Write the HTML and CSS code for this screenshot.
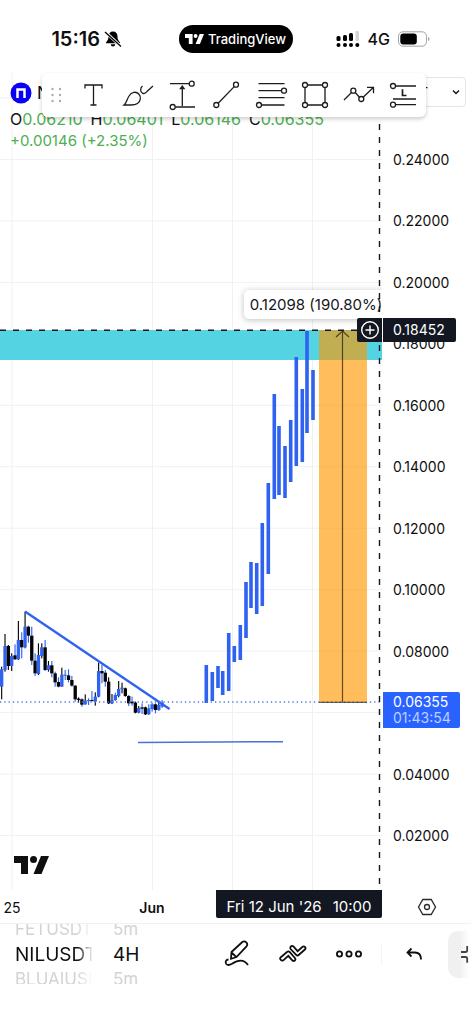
FILE: index.html
```html
<!DOCTYPE html>
<html lang="en">
<head>
  <meta charset="UTF-8">
  <meta name="viewport" content="width=device-width, initial-scale=1.0">
  <title>NILUSDT 4H</title>
  <link rel="stylesheet" href="styles.css">
</head>
<body>

<svg width="0" height="0" class="defs" aria-hidden="true">
  <symbol id="tv-logo" viewBox="0 0 35 18">
    <path d="M0 0h14v18H7V7H0z"/>
    <circle cx="19.500" cy="3.500" r="3.500"/>
    <path d="M27 0h8l-7.500 18h-8z"/>
  </symbol>
</svg>

<header class="status">
  <div class="status-side">
    <span class="clock">15:16</span>
    <svg width="18" height="18" viewBox="0 0 18 18">
      <path d="M9 1.500c-3 0-4.500 2-4.500 5C4.500 10 3 11 2 12.500v.8h14v-.8c-1-1.500-2.500-2.500-2.500-6 0-3-1.500-5-4.500-5zM6.800 14.300a2.200 2.200 0 0 0 4.400 0z"/>
      <path d="M2 2.500l15 14" stroke="#fff" stroke-width="3"/>
      <path d="M1 2l16 14.500" stroke="#000" stroke-width="1.300"/>
    </svg>
  </div>
  <div class="pill">
    <svg width="19" height="10" fill="#fff"><use href="#tv-logo"/></svg>
    <span>TradingView</span>
  </div>
  <div class="status-side signal">
    <svg width="24" height="16" viewBox="0 0 24 16">
      <rect x="0.500" y="5" width="4" height="5" rx="1.500"/>
      <rect x="7" y="4" width="4" height="6" rx="1.500"/>
      <rect x="13" y="2" width="4" height="8" rx="1.500"/>
      <rect x="19.500" y="0" width="3.500" height="10" rx="1" fill="#d5d5d7"/>
      <circle cx="2.500" cy="14" r="2"/><circle cx="9" cy="14" r="2"/>
      <circle cx="15" cy="14" r="2"/><circle cx="21.300" cy="14" r="2"/>
    </svg>
    <span class="network">4G</span>
    <svg width="32" height="16" viewBox="0 0 32 16">
      <rect x="0.500" y="0.800" width="28" height="14.400" rx="4.500" fill="#fff" stroke="#a3a3a5"/>
      <rect x="2.300" y="2.500" width="16.500" height="11" rx="3"/>
      <path d="M30 6v4q1.500-.5 1.500-2T30 6z" fill="#a3a3a5"/>
    </svg>
  </div>
</header>

<main class="chart">
  <svg class="plot" viewBox="0 73 382 817" preserveAspectRatio="xMaxYMin slice">
    <g id="grid" stroke="#f0f1f3"></g>

    <rect x="0" y="330" width="382" height="30" fill="#54d3e2"/>
    <g id="candles" transform="translate(0 590) scale(0.3333)"></g>
    <g id="bars" fill="#2f62f0"></g>

    <path d="M25 611.500L169.500 709" stroke="#2f62f0" stroke-width="2.400"/>
    <path d="M138 742.500L283 741.700" stroke="#4a72d6" stroke-width="1.500"/>
    <path d="M0 702H382" stroke="#4f78dc" stroke-width="1.300" stroke-dasharray="1.300 3"/>

    <rect x="319" y="330" width="48" height="372" fill="rgba(255, 152, 0, 0.64)"/>
    <path d="M319 702.300H367M342.500 702V331M336 337l6.500-6 6.500 6" fill="none" stroke="#000" stroke-opacity="0.6" stroke-width="1.200"/>

    <rect class="measure" x="244" y="290" width="142" height="29" rx="5"/>
    <text class="measure-text" x="316" y="310" text-anchor="middle">0.12098 (190.80%)</text>

    <g stroke="#131722" stroke-width="1.400" stroke-dasharray="6 7">
      <path d="M0 330.300H382"/>
      <path d="M379.500 72V890"/>
    </g>

    <svg x="14" y="856" width="35" height="18" fill="#0f0f0f"><use href="#tv-logo"/></svg>
  </svg>

  <ul class="scale">
    <li>0.24000</li>
    <li>0.22000</li>
    <li>0.20000</li>
    <li>0.18000</li>
    <li>0.16000</li>
    <li>0.14000</li>
    <li>0.12000</li>
    <li>0.10000</li>
    <li>0.08000</li>
    <li></li>
    <li>0.04000</li>
    <li>0.02000</li>
  </ul>

  <div class="tag tag-cursor">0.18452</div>
  <div class="tag tag-last">0.06355<span>01:43:54</span></div>
  <button class="add" aria-label="Add alert">
    <svg width="20" height="20" viewBox="0 0 20 20" fill="none" stroke="#fff" stroke-width="1.400">
      <circle cx="10" cy="10" r="8.300"/><path d="M10 5.500v9M5.500 10h9"/>
    </svg>
  </button>

  <div class="legend">
    <div class="legend-title">
      <svg width="22" height="22" viewBox="0 0 22 22">
        <circle cx="11" cy="11" r="10.500" fill="#0a00f5"/>
        <path d="M7.500 16V7.500h7V16" fill="none" stroke="#fff" stroke-width="2.500"/>
      </svg>
      <span>NIL</span>
    </div>
    <div class="ohlc">
      <span>O<b>0.06210</b></span>
      <span>H<b>0.06401</b></span>
      <span>L<b>0.06146</b></span>
      <span>C<b>0.06355</b></span>
    </div>
    <div class="change">+0.00146 (+2.35%)</div>
  </div>

  <button class="currency">
    USDT
    <svg width="10" height="8" viewBox="0 0 10 8" fill="none" stroke="#131722" stroke-width="1.500"><path d="M2 2.500l3 3 3-3"/></svg>
  </button>

  <div class="tools">
    <svg class="grip" width="29" height="32" viewBox="0 0 29 32" fill="#a9abb0">
      <circle cx="10.500" cy="10" r="1.200"/><circle cx="18" cy="10" r="1.200"/>
      <circle cx="10.500" cy="16" r="1.200"/><circle cx="18" cy="16" r="1.200"/>
      <circle cx="10.500" cy="22" r="1.200"/><circle cx="18" cy="22" r="1.200"/>
    </svg>
    <button aria-label="Text">
      <svg viewBox="0 0 32 32"><path d="M8 9.500V6h17v3.500M16.500 6v20M13.500 26h6"/></svg>
    </button>
    <button aria-label="Brush">
      <svg viewBox="0 0 32 32"><path d="M2 26c2.500-2 3-6 5-9 2.500-4 7-5 9.800-2 2.700 3 1.700 7.500-1.300 9.500-2 1.300-4 1.500-6.500 1.500zM20.500 7c-2.500 2-2.500 6 .2 7.300 2 .8 3.500-.8 4.500-2L31 7"/></svg>
    </button>
    <button aria-label="Price range">
      <svg viewBox="0 0 32 32"><path d="M4 4.700h19M9.500 28H29M16.300 27V8M14.500 9.500l1.800-2.500 1.800 2.500z"/><circle cx="25.700" cy="4.700" r="2.500"/><circle cx="6.700" cy="28" r="2.500"/></svg>
    </button>
    <button aria-label="Trend line">
      <svg viewBox="0 0 32 32"><path d="M8.200 24.200L24.200 7.600"/><circle cx="6.300" cy="26" r="2.500"/><circle cx="26" cy="5.700" r="2.500"/></svg>
    </button>
    <button aria-label="Fib retracement">
      <svg viewBox="0 0 32 32"><path d="M3.500 4.700h26M3.500 11.700h23M3.500 18.700h26M6.500 26h23"/><circle cx="29" cy="11.700" r="2.500"/><circle cx="4" cy="26" r="2.500"/></svg>
    </button>
    <button aria-label="Rectangle">
      <svg viewBox="0 0 32 32"><path d="M8.500 6h15M8.500 26h15M6 8.500v15M26 8.500v15"/><circle cx="6" cy="6" r="2.500"/><circle cx="26" cy="6" r="2.500"/><circle cx="6" cy="26" r="2.500"/><circle cx="26" cy="26" r="2.500"/></svg>
    </button>
    <button aria-label="Path">
      <svg viewBox="0 0 32 32"><path d="M1 21l7.500-7.500M12.200 13.500l4.300 4.700M20.200 18.300L30.500 8.300M24 8.300h6.500v6"/><circle cx="10.300" cy="11.700" r="2.500"/><circle cx="18.300" cy="20" r="2.500"/></svg>
    </button>
    <button aria-label="Long position">
      <svg viewBox="0 0 32 32"><path d="M7.500 7H28M5 20h23M7.500 25.700H28"/><circle cx="5" cy="7" r="2.500"/><circle cx="5" cy="25.700" r="2.500"/><path d="M14.500 10.300v6.200h4" stroke-width="1.700"/></svg>
    </button>
  </div>
</main>

<div class="timeline">
  <div class="times">
    <span>25</span>
    <strong>Jun</strong>
    <div class="tag-time"><span>Fri 12 Jun '26</span><span>10:00</span></div>
  </div>
  <button class="settings" aria-label="Chart settings">
    <svg width="20" height="20" viewBox="0 0 20 20" fill="none" stroke="#2a2a2a" stroke-width="1.300">
      <path d="M5.800 2.500h8.400l4.300 7.500-4.300 7.500H5.800L1.500 10z"/><circle cx="10" cy="10" r="2.500"/>
    </svg>
  </button>
</div>

<nav class="bottom">
  <div class="wheel wheel-symbol">
    <span>FETUSDT</span>
    <b>NILUSDT</b>
    <span>BLUAIUSDT</span>
  </div>
  <div class="wheel">
    <span>5m</span>
    <b>4H</b>
    <span>5m</span>
  </div>
  <div class="actions">
    <button aria-label="Draw">
      <svg viewBox="0 0 28 28"><path d="M8.500 12L19.300 2q2-1.500 4 .3 1.800 2 .2 4L13.500 17 8 18.800zM8.500 12.500l4.800 4.500M5.500 19.500c-2.500.3-3.300 2-2.500 4 1 2.200 3.500 1.700 6 .2 5.500-3.500 12-4.700 16 1.300"/></svg>
    </button>
    <button aria-label="Indicators">
      <svg viewBox="0 0 28 28"><path d="M1.500 17.500l6.800-5.700q1.200-.8 2.300.2l5.500 6.200q.8 1.200-.3 2.300-1.200 1-2.300 0l-4.200-4.700-5 4.500q-1.300.9-2.500-.4-1.200-1.300-.3-2.400zM11.800 6.500q1.300-1.200 2.600 0l4.200 4.700 5-4.400q1.300-.9 2.500.3 1 1.300-.2 2.400l-6.500 5.700q-1.200.8-2.200-.3L11.600 9q-.8-1.300.2-2.500z"/></svg>
    </button>
    <button aria-label="More">
      <svg viewBox="0 0 28 28"><circle cx="4.500" cy="14" r="2.600"/><circle cx="14" cy="14" r="2.600"/><circle cx="23.500" cy="14" r="2.600"/></svg>
    </button>
    <i class="divider"></i>
    <button aria-label="Undo">
      <svg viewBox="0 0 28 28"><path d="M11.500 8.500L7.500 12.500l4 4M7.500 12.500H15q6 0 6 7"/></svg>
    </button>
    <button class="expand" aria-label="Exit fullscreen">
      <svg viewBox="0 0 28 28"><path d="M1 12h4.500q1.700 0 1.700-1.700V6M1 17h4.500q1.700 0 1.700 1.700v4"/></svg>
    </button>
  </div>
</nav>

<script src="chart.js"></script>
</body>
</html>
```

FILE: styles.css
```css
* {
  box-sizing: border-box;
}

body {
  margin: 0;
  background: #fff;
  color: #0f0f0f;
  font-family: Inter, "Liberation Sans", sans-serif;
  font-size: 14px;
  overflow-x: hidden;
}

button {
  padding: 0;
  border: 0;
  background: none;
  color: inherit;
  font: inherit;
  cursor: pointer;
}

svg {
  display: block;
  flex: none;
}

.defs {
  position: absolute;
}

/* status bar */
.status {
  display: grid;
  grid-template-columns: 1fr auto 1fr;
  align-items: center;
  height: 73px;
  padding-top: 5px;
}

.status-side {
  display: flex;
  align-items: center;
  justify-content: center;
  gap: 4px;
  padding-right: 5px;
}

.signal {
  gap: 8px;
  padding: 0 0 0 2px;
}

.clock {
  font-size: 20px;
  font-weight: 600;
}

.network {
  font-size: 16px;
  font-weight: 500;
}

.pill {
  display: flex;
  align-items: center;
  justify-content: center;
  gap: 4px;
  width: 114px;
  height: 28px;
  border-radius: 14px;
  background: #000;
  color: #fff;
  font-size: 13px;
  font-weight: 500;
}

/* chart */
.chart {
  position: relative;
  display: flex;
}

.plot {
  flex: 1;
  min-width: 0;
  height: 817px;
}

.measure {
  fill: #fff;
  filter: drop-shadow(0 1px 3px rgba(0, 0, 0, 0.25));
}

.measure-text {
  font-size: 15px;
  fill: #131722;
}

.scale {
  display: flex;
  flex-direction: column;
  justify-content: space-between;
  width: 89px;
  margin: 0;
  padding: 77px 0 44px 11px;
  list-style: none;
  line-height: 20px;
}

.scale li {
  height: 20px;
}

.tag {
  position: absolute;
  right: 15px;
  width: 73px;
  padding-left: 10px;
  border-radius: 0 2px 2px 0;
  color: #fff;
}

.tag-cursor {
  top: 245px;
  background: #131722;
  line-height: 24px;
}

.tag-last {
  top: 619px;
  right: 11px;
  width: 77px;
  padding-top: 2px;
  padding-bottom: 2px;
  background: #2962ff;
  line-height: 16px;
}

.tag-last span {
  display: block;
  color: #bfd0ff;
}

.add {
  position: absolute;
  top: 245px;
  right: 89px;
  display: grid;
  place-items: center;
  width: 25px;
  height: 24px;
  border-radius: 2px 0 0 2px;
  background: #131722;
}

.legend {
  position: absolute;
  top: 9px;
  left: 10px;
  font-size: 15px;
  line-height: 22px;
}

.legend-title {
  display: flex;
  gap: 5px;
  font-size: 17px;
}

.ohlc {
  display: flex;
  gap: 8px;
  margin-top: 5px;
  font-size: 16px;
  line-height: 21px;
}

.ohlc b,
.change {
  color: #4caf50;
  font-weight: 400;
}

.currency {
  position: absolute;
  top: 4px;
  right: 5px;
  display: flex;
  align-items: center;
  justify-content: flex-end;
  gap: 23px;
  width: 78px;
  height: 30px;
  padding-right: 4px;
  border: 1px solid #e3e4e8;
  border-radius: 4px;
  background: #fff;
}

.tools {
  position: absolute;
  top: 0;
  left: 42px;
  right: 45px;
  display: flex;
  align-items: center;
  height: 44px;
  border-radius: 6px;
  background: #fff;
  box-shadow: 0 2px 4px rgba(0, 0, 0, 0.2);
}

.tools button {
  display: grid;
  flex: 1;
  place-items: center;
}

.tools button svg {
  width: 32px;
  height: 32px;
  overflow: visible;
  fill: none;
  stroke: #1c1c1c;
  stroke-width: 1.3;
}

/* time scale */
.timeline {
  display: flex;
  height: 34px;
  border-bottom: 1px solid #f0f1f3;
}

.times {
  position: relative;
  display: flex;
  flex: 1;
  gap: 98px;
  line-height: 35px;
  text-align: center;
}

.times > span {
  width: 24px;
}

.times strong {
  width: 60px;
  font-weight: 600;
}

.tag-time {
  position: absolute;
  top: 0;
  right: 0;
  display: flex;
  justify-content: center;
  gap: 11px;
  width: 166px;
  height: 28px;
  border-radius: 0 0 2px 2px;
  background: #131722;
  color: #fff;
  font-size: 15px;
  line-height: 34px;
}

.settings {
  display: grid;
  place-items: center;
  width: 89px;
}

/* bottom toolbar */
.bottom {
  display: flex;
  height: 60px;
  padding-left: 15px;
}

.wheel {
  display: flex;
  flex-direction: column;
  justify-content: center;
  overflow: hidden;
  width: 40px;
  color: #d3d3d5;
  font-size: 17px;
  line-height: 25px;
}

.wheel b {
  color: #0f0f0f;
  font-size: 19px;
  font-weight: 400;
}

.wheel-symbol {
  width: 78px;
  margin-right: 20px;
  -webkit-mask-image: linear-gradient(to right, #000 62px, transparent 78px);
  mask-image: linear-gradient(to right, #000 62px, transparent 78px);
}

.actions {
  display: flex;
  align-items: center;
  margin-left: auto;
}

.actions button {
  display: grid;
  place-items: center;
  width: 56px;
  height: 47px;
}

.actions svg {
  width: 28px;
  height: 28px;
  fill: none;
  stroke: #0f0f0f;
  stroke-width: 1.8;
}

.divider {
  width: 1px;
  height: 20px;
  margin: 0 4px;
  background: #f3f3f5;
}

.actions .expand {
  place-items: center start;
  overflow: hidden;
  width: 23px;
  margin-left: 6px;
  padding-left: 12px;
  border-radius: 10px 0 0 10px;
  background: linear-gradient(to right, #f0f0f0 12px, #fff 21px);
}

.actions .expand svg {
  stroke: #444;
}
```

FILE: chart.js
```js
const SVG_NS = 'http://www.w3.org/2000/svg';

function draw(parent, tag, attrs) {
  const el = document.createElementNS(SVG_NS, tag);
  for (const name in attrs) {
    el.setAttribute(name, attrs[name]);
  }
  document.getElementById(parent).appendChild(el);
}

// grid
for (let i = -1; i < 12; i++) {
  const y = 159.5 + i * 61.45;
  draw('grid', 'path', { d: `M0 ${y}H382` });
}
[12, 152.5, 232.5, 312.5].forEach(x => draw('grid', 'path', { d: `M${x} 73V890` }));

// candles: high, body top, body bottom, low, body colour, wick colour
const BLUE = '#2f62f0';
const BLACK = '#050505';
const candles = [
  [230, 238, 290, 328, 'u', 'k'], [132, 168, 240, 245, 'u', 'k'],
  [165, 168, 228, 240, 'k', 'k'], [190, 198, 228, 243, 'u', 'k'],
  [163, 196, 208, 210, 'k', 'u'], [93, 150, 208, 210, 'u', 'k'],
  [127, 150, 172, 205, 'k', 'u'], [65, 110, 172, 175, 'u', 'k'],
  [107, 110, 137, 158, 'k', 'u'], [110, 137, 212, 225, 'k', 'u'],
  [190, 212, 250, 258, 'k', 'u'], [160, 195, 252, 255, 'u', 'k'],
  [160, 172, 198, 205, 'u', 'k'], [150, 172, 240, 243, 'k', 'u'],
  [213, 226, 240, 245, 'u', 'k'], [213, 226, 250, 262, 'k', 'u'],
  [245, 250, 277, 290, 'k', 'u'], [262, 276, 290, 292, 'k', 'u'],
  [233, 254, 290, 290, 'u', 'k'], [240, 254, 257, 270, 'u', 'u'],
  [238, 256, 270, 277, 'k', 'u'], [258, 270, 287, 290, 'k', 'u'],
  [285, 287, 328, 335, 'k', 'u'], [322, 326, 330, 338, 'k', 'k'],
  [325, 328, 344, 350, 'k', 'u'], [313, 332, 343, 344, 'u', 'k'],
  [325, 330, 333, 345, 'u', 'u'], [303, 330, 333, 335, 'k', 'u'],
  [307, 320, 335, 347, 'u', 'k'], [218, 243, 320, 322, 'u', 'k'],
  [225, 243, 250, 280, 'k', 'u'], [240, 248, 275, 290, 'k', 'u'],
  [262, 275, 340, 342, 'k', 'k'], [312, 330, 340, 342, 'u', 'k'],
  [308, 315, 330, 333, 'u', 'u'], [273, 297, 318, 322, 'u', 'k'],
  [278, 293, 297, 310, 'u', 'k'], [293, 295, 318, 320, 'k', 'k'],
  [315, 318, 340, 348, 'k', 'u'], [320, 335, 340, 347, 'k', 'u'],
  [335, 338, 368, 370, 'k', 'k'], [348, 354, 368, 370, 'u', 'k'],
  [340, 352, 356, 372, 'k', 'u'], [350, 352, 373, 375, 'k', 'k'],
  [343, 355, 373, 375, 'u', 'u'], [338, 343, 357, 365, 'u', 'u'],
  [340, 343, 360, 370, 'k', 'u'], [333, 345, 360, 362, 'u', 'k'],
  [330, 338, 350, 354, 'u', 'u']
];
candles.forEach(([high, top, bottom, low, body, wick], i) => {
  const x = 5 + i * 10.03;
  const colour = c => (c === 'u' ? BLUE : BLACK);
  draw('candles', 'rect', { x: x - 1.7, y: high, width: 3.4, height: low - high, fill: colour(wick) });
  draw('candles', 'rect', { x: x - 5, y: top, width: 10, height: bottom - top, fill: colour(body) });
});

// projected bars: x, high, low
const bars = [
  [206.3, 665, 703], [212.3, 672, 701], [218, 666, 688], [222.7, 671, 695],
  [228.7, 633, 691], [234.3, 646, 662], [240.3, 625, 660], [246, 582, 638],
  [251, 562, 608], [256.7, 563, 614], [262.3, 523, 606], [268.3, 483, 574],
  [274.3, 394, 499], [279, 426, 495], [285, 446, 498], [290.7, 420, 482],
  [296.3, 357, 466], [302.3, 389, 462], [307, 331, 433], [313, 370, 420]
];
bars.forEach(([x, high, low]) => {
  draw('bars', 'rect', { x: x - 1.8, y: high, width: 3.6, height: low - high });
});
```
